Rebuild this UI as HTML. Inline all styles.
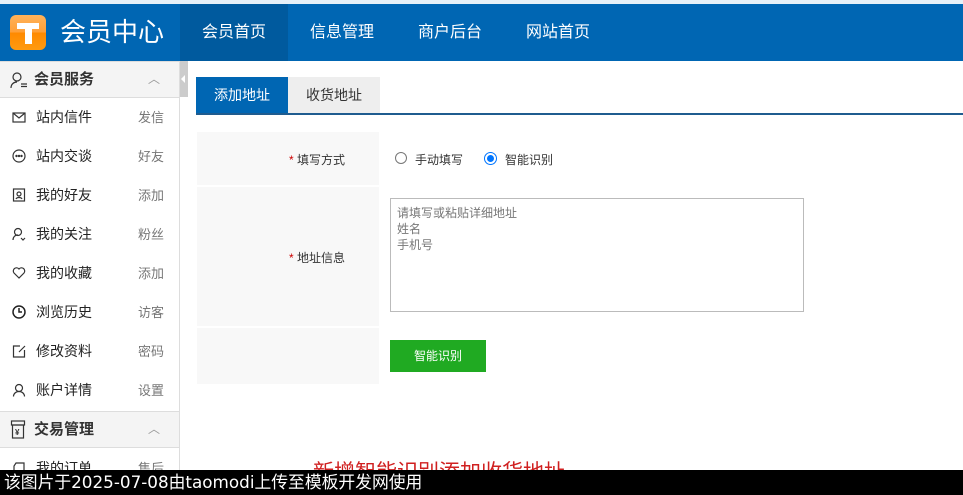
<!DOCTYPE html>
<html><head><meta charset="utf-8"><style>
*{margin:0;padding:0;box-sizing:border-box}
body{width:963px;height:495px;overflow:hidden;background:#fff;font-family:"Liberation Sans","Noto Sans CJK SC",sans-serif;position:relative;color:#333}
.a{position:absolute}
.top{left:0;top:0;width:963px;height:4px;background:#e6f0f8}
.hd{left:0;top:4px;width:963px;height:57px;background:#0066b3}
.logo{left:10px;top:15px;width:36px;height:35px;border-radius:6px;background:linear-gradient(#ffb25a 0,#ffa038 48%,#ff8a00 52%,#ff9a10 100%)}
.nav{top:4px;height:57px;line-height:57px;color:#fff;font-size:16px;text-align:center}
.sb{left:0;top:61px;width:180px;height:434px;border-right:1px solid #ddd}
.sh{left:0;width:179px;height:37px;background:#f4f4f4;border-bottom:1px solid #ddd;border-top:1px solid #ddd;font-size:15px;font-weight:bold;color:#333;line-height:35px}
.it{left:0;width:179px;height:39px;line-height:39px;font-size:14px;color:#222}
.it .t{position:absolute;left:36px}
.it .r{position:absolute;left:138px;font-size:13px;color:#777}
.it svg{position:absolute;left:12px;top:12px}
.car{position:absolute;left:148px;top:0;color:#999;font-size:12px;font-weight:normal}
</style></head><body>
<div class="a top"></div>
<div class="a hd"></div>
<div class="a logo"><div class="a" style="left:7px;top:8px;width:22px;height:6px;background:#fff"></div><div class="a" style="left:15px;top:8px;width:7px;height:21px;background:#fff"></div></div>
<div class="a" style="left:60px;top:4px;height:57px;line-height:57px;color:#fff;font-size:26px">会员中心</div>
<div class="a nav" style="left:180px;width:108px;background:#005a9e">会员首页</div>
<div class="a nav" style="left:290px;width:104px">信息管理</div>
<div class="a nav" style="left:398px;width:104px">商户后台</div>
<div class="a nav" style="left:506px;width:104px">网站首页</div>

<div class="a sb"></div>
<div class="a" style="left:180px;top:61px;width:8px;height:36px;background:#ccc"><div class="a" style="left:1px;top:14px;border:4px solid transparent;border-right:4px solid #fff;border-left:0"></div></div>
<div class="a sh" style="top:61px"><svg class="a" style="left:10px;top:9px" width="18" height="18" fill="none" stroke="#333" stroke-width="1.2"><circle cx="7" cy="6" r="4"/><path d="M1 17c0-4 3-6 6-6M11 13h6M11 15.5h6"/></svg><span style="position:absolute;left:34px">会员服务</span><span class="car">︿</span></div>
<div class="a it" style="top:98px"><svg width="14" height="14" fill="none" stroke="#333" stroke-width="1.2"><rect x="1" y="3" width="12" height="9"/><path d="M1 3l6 5 6-5"/></svg><span class="t">站内信件</span><span class="r">发信</span></div>
<div class="a it" style="top:137px"><svg width="14" height="14" fill="none" stroke="#333" stroke-width="1.2"><circle cx="7" cy="7" r="6"/><circle cx="4.5" cy="7" r=".6" fill="#333"/><circle cx="7" cy="7" r=".6" fill="#333"/><circle cx="9.5" cy="7" r=".6" fill="#333"/></svg><span class="t">站内交谈</span><span class="r">好友</span></div>
<div class="a it" style="top:176px"><svg width="14" height="14" fill="none" stroke="#333" stroke-width="1.2"><rect x="1.5" y="1" width="11" height="12"/><circle cx="7" cy="6" r="2"/><path d="M4 11c1-2 5-2 6 0"/></svg><span class="t">我的好友</span><span class="r">添加</span></div>
<div class="a it" style="top:215px"><svg width="14" height="14" fill="none" stroke="#333" stroke-width="1.2"><circle cx="6" cy="5" r="3.5"/><path d="M1 13c0-3 2-5 5-5M9 11l2 2 2-2"/></svg><span class="t">我的关注</span><span class="r">粉丝</span></div>
<div class="a it" style="top:254px"><svg width="14" height="14" fill="none" stroke="#333" stroke-width="1.2"><path d="M7 12L2 7a3 3 0 015-4 3 3 0 015 4z"/></svg><span class="t">我的收藏</span><span class="r">添加</span></div>
<div class="a it" style="top:293px"><svg width="14" height="14" fill="none" stroke="#222" stroke-width="1.5"><circle cx="7" cy="7" r="6"/><path d="M7 3v4h3"/></svg><span class="t">浏览历史</span><span class="r">访客</span></div>
<div class="a it" style="top:332px"><svg width="14" height="14" fill="none" stroke="#333" stroke-width="1.2"><path d="M8 2H1.5v11h11V6M7 8l6-6"/></svg><span class="t">修改资料</span><span class="r">密码</span></div>
<div class="a it" style="top:371px"><svg width="14" height="14" fill="none" stroke="#333" stroke-width="1.2"><circle cx="7" cy="5" r="3.5"/><path d="M1.5 13.5c0-3 2.5-5 5.5-5s5.5 2 5.5 5"/></svg><span class="t">账户详情</span><span class="r">设置</span></div>
<div class="a sh" style="top:411px"><svg class="a" style="left:10px;top:8px" width="16" height="20" fill="none" stroke="#333" stroke-width="1.2"><rect x="1.5" y="1" width="13" height="4"/><rect x="2.5" y="5" width="11" height="13"/><text x="5" y="15" font-size="8" fill="#333" stroke="none">¥</text></svg><span style="position:absolute;left:34px">交易管理</span><span class="car">︿</span></div>
<div class="a it" style="top:449px"><svg width="14" height="14" fill="none" stroke="#333" stroke-width="1.2"><path d="M4 2h8v11H2V5z"/></svg><span class="t">我的订单</span><span class="r">售后</span></div>

<div class="a" style="left:196px;top:77px;width:92px;height:36px;background:#0066b3;color:#fff;font-size:14px;line-height:36px;text-align:center">添加地址</div>
<div class="a" style="left:288px;top:77px;width:92px;height:36px;background:#eee;color:#333;font-size:14px;line-height:36px;text-align:center">收货地址</div>
<div class="a" style="left:196px;top:113px;width:767px;height:2px;background:#1f5c8f"></div>

<div class="a" style="left:197px;top:132px;width:182px;height:53px;background:#f8f8f8"></div>
<div class="a" style="left:197px;top:187px;width:182px;height:139px;background:#f8f8f8"></div>
<div class="a" style="left:197px;top:328px;width:182px;height:56px;background:#f8f8f8"></div>
<div class="a" style="left:289px;top:151px;font-size:12px;color:#333"><span style="color:#c00">* </span>填写方式</div>
<div class="a" style="left:289px;top:249px;font-size:12px;color:#333"><span style="color:#c00">* </span>地址信息</div>
<div class="a" style="left:395px;top:152px;width:12px;height:12px;border:1px solid #777;border-radius:50%"></div>
<div class="a" style="left:415px;top:151px;font-size:12px">手动填写</div>
<div class="a" style="left:484px;top:152px;width:13px;height:13px;border:1px solid #0075ff;border-radius:50%;background:#fff"><div class="a" style="left:2px;top:2px;width:7px;height:7px;border-radius:50%;background:#0075ff"></div></div>
<div class="a" style="left:505px;top:151px;font-size:12px">智能识别</div>
<div class="a" style="left:390px;top:198px;width:414px;height:114px;border:1px solid #bbb;padding:6px 6px;font-size:12px;line-height:16px;color:#777">请填写或粘贴详细地址<br>姓名<br>手机号</div>
<div class="a" style="left:390px;top:340px;width:96px;height:32px;background:#20aa22;color:#fff;font-size:12px;line-height:32px;text-align:center">智能识别</div>

<div class="a" style="left:313px;top:460px;font-size:21px;color:#d02020;line-height:26px;white-space:nowrap">新增智能识别添加收货地址</div>
<div class="a" style="left:0;top:470px;width:963px;height:25px;background:#000;color:#fff;font-size:16.8px;line-height:25px;padding-left:4px;font-family:'DejaVu Sans','Noto Sans CJK SC',sans-serif;white-space:nowrap">该图片于2025-07-08由taomodi上传至模板开发网使用</div>
</body></html>
